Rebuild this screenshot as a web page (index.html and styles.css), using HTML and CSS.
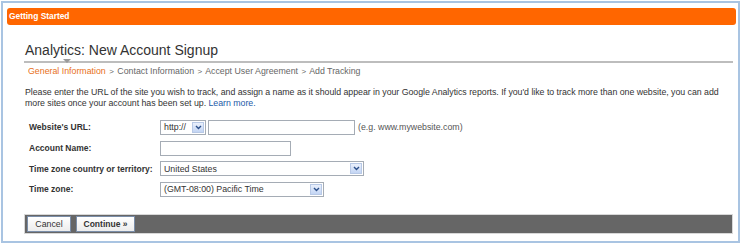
FILE: index.html
```html
<!DOCTYPE html>
<html>
<head>
<meta charset="utf-8">
<link rel="stylesheet" href="styles.css">
</head>
<body>
<div class="frame">
  <div class="topbar">Getting Started</div>
  <div class="content">
    <h1 class="title">Analytics: New Account Signup</h1>
    <div class="rule"><span class="pointer"></span></div>
    <div class="steps"><span class="current">General Information</span> <span class="sep">&gt;</span> Contact Information <span class="sep">&gt;</span> Accept User Agreement <span class="sep">&gt;</span> Add Tracking</div>
    <p class="intro">Please enter the URL of the site you wish to track, and assign a name as it should appear in your Google Analytics reports. If you'd like to track more than one website, you can add more sites once your account has been set up. <a class="link" href="#">Learn more.</a></p>
    <div class="form">
      <div class="row">
        <div class="label">Website's URL:</div>
        <div class="field">
          <span class="select sel-proto">http://<span class="arrow"><svg width="7" height="5" viewBox="0 0 7 5"><path d="M1 1 L3.5 3.5 L6 1" fill="none" stroke="#2b4f8a" stroke-width="1.4"/></svg></span></span>
          <span class="input in-url"></span>
          <span class="hint">(e.g. www.mywebsite.com)</span>
        </div>
      </div>
      <div class="row">
        <div class="label">Account Name:</div>
        <div class="field"><span class="input in-name"></span></div>
      </div>
      <div class="row">
        <div class="label">Time zone country or territory:</div>
        <div class="field"><span class="select sel-country">United States<span class="arrow"><svg width="7" height="5" viewBox="0 0 7 5"><path d="M1 1 L3.5 3.5 L6 1" fill="none" stroke="#2b4f8a" stroke-width="1.4"/></svg></span></span></div>
      </div>
      <div class="row">
        <div class="label">Time zone:</div>
        <div class="field"><span class="select sel-tz">(GMT-08:00) Pacific Time<span class="arrow"><svg width="7" height="5" viewBox="0 0 7 5"><path d="M1 1 L3.5 3.5 L6 1" fill="none" stroke="#2b4f8a" stroke-width="1.4"/></svg></span></span></div>
      </div>
    </div>
    <div class="buttons">
      <span class="btn btn-cancel">Cancel</span>
      <span class="btn btn-continue">Continue &raquo;</span>
    </div>
  </div>
</div>
</body>
</html>
```
FILE: styles.css
```css
html, body {
  margin: 0;
  padding: 0;
  background: #ffffff;
}
body {
  font-family: "Liberation Sans", Arial, sans-serif;
  font-size: 8.8px;
  color: #333333;
}
.frame {
  margin: 1px 0 0 1px;
  width: 735px;
  height: 238px;
  border: 2px solid #a9c4e2;
  background: #ffffff;
  overflow: hidden;
}
.topbar {
  margin: 5px 2px 0 4px;
  height: 17px;
  line-height: 17px;
  background: #ff6600;
  border-radius: 3px;
  color: #ffffff;
  font-weight: bold;
  font-size: 8.4px;
  padding-left: 2px;
}
.content {
  padding: 0 5px 0 21px;
}
.title {
  margin: 17px 0 0 1px;
  font-size: 14px;
  font-weight: normal;
  color: #333333;
  line-height: 16px;
}
.rule {
  position: relative;
  margin-top: 3px;
  height: 2px;
  background: #bdbdbd;
}
.pointer {
  position: absolute;
  left: 39px;
  top: -2px;
  width: 0;
  height: 0;
  border-left: 4px solid transparent;
  border-right: 4px solid transparent;
  border-top: 4px solid #9a9a9a;
}
.steps {
  margin: 3px 0 0 4px;
  line-height: 11px;
  color: #666666;
}
.steps .current {
  color: #e8701a;
}
.steps .sep {
  font-size: 8px;
  padding: 0 1px;
}
.intro {
  margin: 10px 0 0 1px;
  line-height: 11px;
  color: #333333;
  letter-spacing: -0.03px;
}
.link {
  color: #1b5aa8;
  text-decoration: none;
}
.form {
  margin-top: 8px;
  padding-left: 5px;
}
.row {
  display: flex;
  align-items: center;
  height: 20.7px;
}
.label {
  width: 131px;
  font-weight: bold;
  font-size: 8.5px;
  color: #333333;
}
.field {
  display: flex;
  align-items: center;
  gap: 2px;
}
.select, .input {
  box-sizing: border-box;
  height: 15px;
  border: 1px solid #a5acb5;
  background: #ffffff;
  display: inline-flex;
  align-items: center;
  justify-content: space-between;
  padding-left: 3px;
  padding-right: 1px;
  color: #333333;
  font-size: 8.8px;
}
.arrow {
  box-sizing: border-box;
  width: 12px;
  height: 11px;
  background: linear-gradient(#eaf0fc, #c3d5f4);
  border: 1px solid #b8c9e6;
  display: inline-flex;
  align-items: center;
  justify-content: center;
}
.sel-proto { width: 46px; }
.in-url { width: 147px; }
.hint { margin-left: 1px; color: #555555; }
.in-name { width: 131px; }
.sel-country { width: 204px; }
.sel-tz { width: 164px; }
.buttons {
  box-sizing: border-box;
  margin-top: 14px;
  height: 20px;
  background: #666666;
  border: 1px solid #d8d8d8;
  display: flex;
  align-items: center;
  gap: 5px;
  padding-left: 2px;
}
.btn {
  box-sizing: border-box;
  height: 16px;
  line-height: 14px;
  background: linear-gradient(#ffffff, #ececec);
  border: 1px solid #7a8da8;
  color: #333333;
  font-size: 8.8px;
  text-align: center;
}
.btn-cancel { width: 44px; }
.btn-continue { width: 59px; font-weight: bold; font-size: 8.5px; }
```
